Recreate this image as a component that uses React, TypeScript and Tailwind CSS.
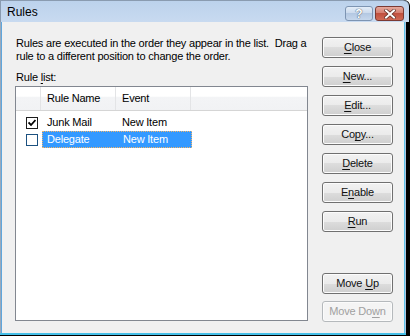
import { ReactNode } from "react";

type BtnProps = {
  children: ReactNode;
  disabled?: boolean;
};

function DlgButton({ children, disabled }: BtnProps) {
  return (
    <button
      type="button"
      className={
        disabled
          ? "h-[21px] w-[71px] rounded-[3px] border border-[#b5b9bc] bg-[#f4f4f4] text-[11px] leading-none text-[#a0a0a0] shadow-[inset_0_0_0_1px_#fbfbfb]"
          : "h-[21px] w-[71px] rounded-[3px] border border-[#707070] bg-[linear-gradient(#f2f2f2_0%,#ebebeb_50%,#dddddd_50%,#cfcfcf_100%)] text-[11px] leading-none text-[#111] shadow-[inset_0_0_0_1px_#fcfcfc]"
      }
    >
      {children}
    </button>
  );
}

function Acc({ children }: { children: ReactNode }) {
  return <span className="underline underline-offset-[2px]">{children}</span>;
}

function CheckBox({ checked }: { checked?: boolean }) {
  return (
    <span
      className={
        checked
          ? "flex h-[12px] w-[12px] items-center justify-center border border-[#1c1c1c] bg-white"
          : "flex h-[12px] w-[12px] items-center justify-center border border-[#1c5180] bg-white"
      }
    >
      {checked && (
        <svg width="8" height="8" viewBox="0 0 8 8">
          <path d="M0.5 3.5 L3 6 L7.5 1" fill="none" stroke="#000" strokeWidth="1.8" />
        </svg>
      )}
    </span>
  );
}

export default function App() {
  return (
    <div
      className="flex h-[336px] w-[410px] flex-col overflow-hidden rounded-tr-[6px] bg-black text-black"
      style={{ fontFamily: '"Liberation Sans", Arial, sans-serif' }}
    >
      {/* title bar */}
      <div className="mr-[1px] flex h-[22px] items-center rounded-tr-[6px] border-l border-t border-[#8a9bb0] bg-[linear-gradient(#bcd2ec,#c8daf0)] pl-[6px] pr-[5px]">
        <span className="text-[12px] leading-none text-black">Rules</span>
        <div className="ml-auto flex items-start self-start pt-[5px]">
          <div className="flex h-[15px] w-[28px] items-center justify-center rounded-[3px] border border-[#7d94b2] bg-[linear-gradient(#e4edf8_0%,#cad9ec_50%,#b4c8e2_50%,#c6d7ec_100%)]">
            <span className="text-[12px] font-bold leading-none text-white [text-shadow:0_0_1px_#44556a,0_0_1px_#44556a]">?</span>
          </div>
          <div className="ml-[2px] flex h-[15px] w-[29px] items-center justify-center rounded-[3px] border border-[#7b3a33] bg-[linear-gradient(#e5a99d_0%,#d47a6c_50%,#c0503f_50%,#d06a56_100%)]">
            <svg width="12" height="10" viewBox="0 0 12 10">
              <path d="M2 1.5 L10 8.5 M10 1.5 L2 8.5" stroke="#5a2a22" strokeWidth="3.4" strokeLinecap="square" />
              <path d="M2 1.5 L10 8.5 M10 1.5 L2 8.5" stroke="#fff" strokeWidth="2" strokeLinecap="square" />
            </svg>
          </div>
        </div>
      </div>

      {/* body row */}
      <div className="flex flex-1">
        <div className="w-[1px] bg-[#9aa9bb]" />
        <div className="w-[1px] bg-[#5fa6dc]" />
        <div className="flex flex-1 bg-[#f0f0f0] pb-[11px] pl-[13px] pt-[15px] text-[11px] tracking-[-0.2px]">
          {/* left column */}
          <div className="flex w-[293px] flex-col">
            <p className="ml-[1px] whitespace-pre leading-[13px]">
              {"Rules are executed in the order they appear in the list.  Drag a\nrule to a different position to change the order."}
            </p>
            <div className="ml-[1px] mt-[8px] leading-[13px]">
              Rule <Acc>l</Acc>ist:
            </div>
            <div className="mt-[2px] flex h-[235px] flex-col border border-[#828790] bg-white">
              <div className="flex h-[24px] border-b border-[#d5d5d5] bg-[linear-gradient(#ffffff_0%,#ffffff_40%,#f3f4f6_45%,#f1f2f4_100%)]">
                <div className="w-[25px] border-r border-[#e3e4e6]" />
                <div className="flex w-[75px] items-center border-r border-[#e3e4e6] pl-[6px]">Rule Name</div>
                <div className="flex w-[75px] items-center border-r border-[#e3e4e6] pl-[6px]">Event</div>
              </div>
              <div className="pt-[3px]">
                <div className="flex h-[17px] items-center">
                  <div className="flex w-[26px] justify-end pr-[4px]">
                    <CheckBox checked />
                  </div>
                  <div className="flex h-full w-[150px] items-center">
                    <span className="w-[75px] pl-[5px]">Junk Mail</span>
                    <span className="pl-[5px]">New Item</span>
                  </div>
                </div>
                <div className="flex h-[17px] items-center">
                  <div className="flex w-[26px] justify-end pr-[4px]">
                    <CheckBox />
                  </div>
                  <div className="flex h-full w-[150px] items-center border border-dotted border-[#f0b46a] bg-[#3399ff] text-white">
                    <span className="w-[75px] pl-[4px]">Delegate</span>
                    <span className="pl-[5px]">New Item</span>
                  </div>
                </div>
              </div>
            </div>
          </div>

          {/* right column */}
          <div className="ml-[14px] flex w-[71px] flex-col">
            <div className="flex flex-col gap-[8px]">
              <DlgButton>
                <Acc>C</Acc>lose
              </DlgButton>
              <DlgButton>
                <Acc>N</Acc>ew...
              </DlgButton>
              <DlgButton>
                <Acc>E</Acc>dit...
              </DlgButton>
              <DlgButton>
                Co<Acc>p</Acc>y...
              </DlgButton>
              <DlgButton>
                <Acc>D</Acc>elete
              </DlgButton>
              <DlgButton>
                E<Acc>n</Acc>able
              </DlgButton>
              <DlgButton>
                <Acc>R</Acc>un
              </DlgButton>
            </div>
            <div className="mt-auto flex flex-col gap-[7px]">
              <DlgButton>
                Move <Acc>U</Acc>p
              </DlgButton>
              <DlgButton disabled>
                Move Do<Acc>w</Acc>n
              </DlgButton>
            </div>
          </div>
        </div>
        <div className="w-[1px] bg-[#5fc3ea]" />
        <div className="w-[1px] bg-[#a9c4e2]" />
        <div className="w-[4px] bg-black" />
      </div>
      <div className="mr-[4px] h-[2px] bg-[#45bfe8]" />
      <div className="h-[1px] bg-black" />
    </div>
  );
}
